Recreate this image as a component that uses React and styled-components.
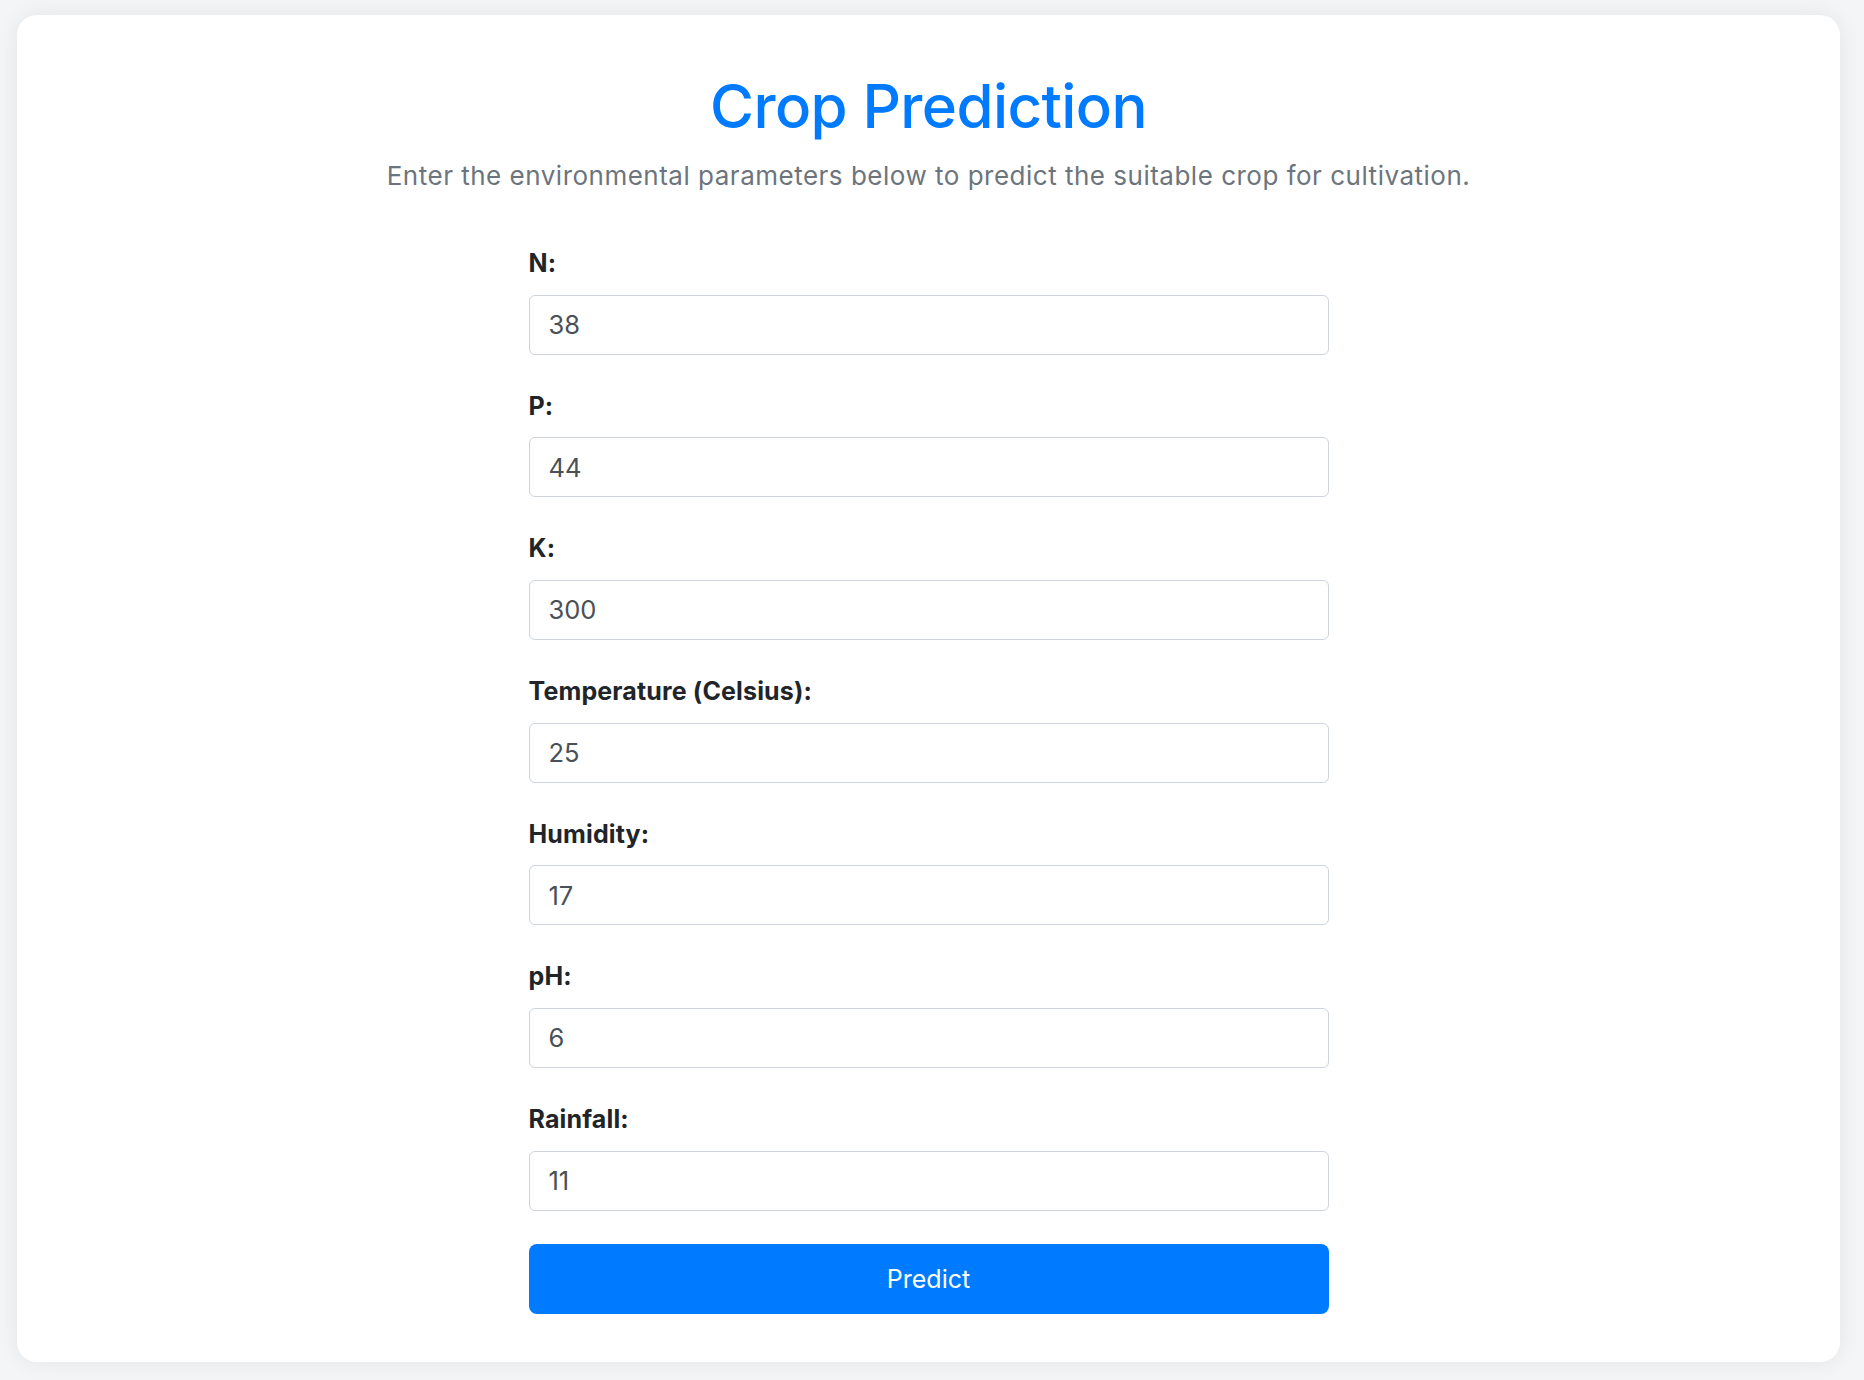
import React from "react";
import styled, { createGlobalStyle } from "styled-components";

const GlobalStyle = createGlobalStyle`
  * { box-sizing: border-box; }
  html, body { margin: 0; padding: 0; }
  body {
    background: #f4f5f7;
    font-family: Inter, "Noto Sans", "Liberation Sans", sans-serif;
    color: #212529;
  }
`;

const Page = styled.div`
  padding: 15px 24px 18px 17px;
`;

const Card = styled.div`
  background: #ffffff;
  border-radius: 20px;
  box-shadow: 0 0 22px rgba(0, 0, 0, 0.07);
  padding: 55px 0 48px;
  display: flex;
  flex-direction: column;
  align-items: center;
`;

const Title = styled.h1`
  margin: 0 0 14px;
  font-size: 60px;
  line-height: 1.2;
  font-weight: 500;
  color: #007bff;
  letter-spacing: -0.6px;
`;

const Subtitle = styled.p`
  margin: 0 0 50px;
  font-size: 26px;
  line-height: 1.5;
  color: #6c757d;
  letter-spacing: 0.5px;
`;

const Form = styled.form`
  width: 800px;
  display: flex;
  flex-direction: column;
`;

const Field = styled.div`
  display: flex;
  flex-direction: column;
  margin-bottom: 33.2px;
`;

const Label = styled.label`
  font-size: 25px;
  line-height: 1.5;
  font-weight: 700;
  color: #212529;
  margin-bottom: 12px;
  letter-spacing: 0.15px;
`;

const Input = styled.input`
  height: 60px;
  width: 100%;
  padding: 0 19px;
  font-family: inherit;
  font-size: 25.5px;
  color: #495057;
  background: #fff;
  border: 1.5px solid #ced4da;
  border-radius: 6px;
  outline: none;
`;

const Button = styled.button`
  height: 70px;
  width: 100%;
  border: none;
  border-radius: 8px;
  background: #007bff;
  color: #ffffff;
  font-family: inherit;
  font-size: 25px;
  cursor: pointer;
`;

const fields = [
  { label: "N:", value: "38" },
  { label: "P:", value: "44" },
  { label: "K:", value: "300" },
  { label: "Temperature (Celsius):", value: "25" },
  { label: "Humidity:", value: "17" },
  { label: "pH:", value: "6" },
  { label: "Rainfall:", value: "11" },
];

export default function App() {
  return (
    <>
      <GlobalStyle />
      <Page>
        <Card>
          <Title>Crop Prediction</Title>
          <Subtitle>
            Enter the environmental parameters below to predict the suitable crop for cultivation.
          </Subtitle>
          <Form onSubmit={(e) => e.preventDefault()}>
            {fields.map((f) => (
              <Field key={f.label}>
                <Label>{f.label}</Label>
                <Input type="text" defaultValue={f.value} />
              </Field>
            ))}
            <Button type="submit">Predict</Button>
          </Form>
        </Card>
      </Page>
    </>
  );
}
